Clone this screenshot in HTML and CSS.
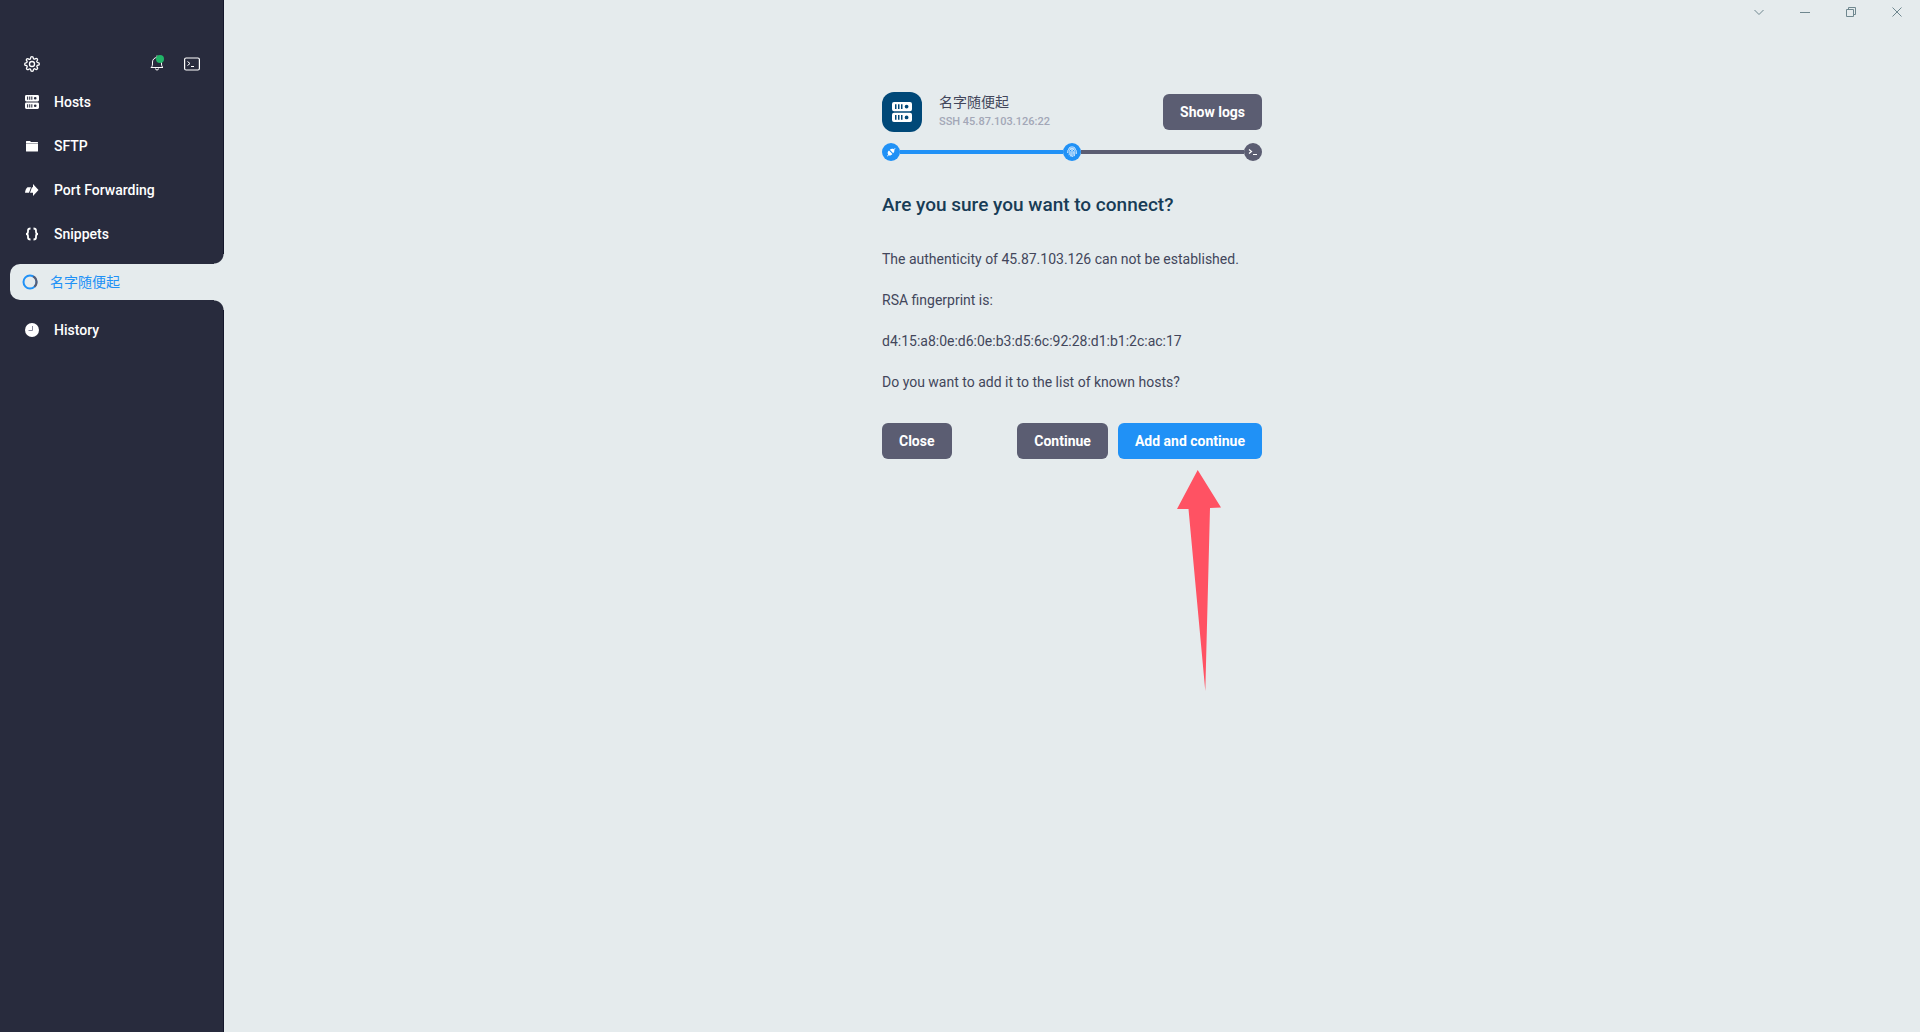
FILE: index.html
```html
<!DOCTYPE html>
<html lang="en">

<head>
	<meta charset="UTF-8">
	<title>名字随便起</title>
	<link rel="stylesheet" href="styles.css">
</head>

<body>
<svg class="defs" aria-hidden="true">
	<symbol id="server" viewBox="0 0 20 20">
		<path fill-rule="evenodd" d="M2 0h16a2 2 0 0 1 2 2v5.200a2 2 0 0 1-2 2H2a2 2 0 0 1-2-2V2a2 2 0 0 1 2-2zM3 2.300v4.600h1.500V2.300zm3 0v4.600h1.500V2.300zm3 0v4.600h1.500V2.300zM14.600 2.700a1.900 1.900 0 1 0 0 3.800 1.900 1.900 0 0 0 0-3.800z"/>
		<path fill-rule="evenodd" transform="translate(0 10.800)" d="M2 0h16a2 2 0 0 1 2 2v5.200a2 2 0 0 1-2 2H2a2 2 0 0 1-2-2V2a2 2 0 0 1 2-2zM3 2.300v4.600h1.500V2.300zm3 0v4.600h1.500V2.300zm3 0v4.600h1.500V2.300zM14.600 2.700a1.900 1.900 0 1 0 0 3.800 1.900 1.900 0 0 0 0-3.800z"/>
	</symbol>
</svg>

<nav class="sidebar">
	<div class="tools">
		<button aria-label="Settings">
			<svg width="16" height="16" viewBox="0 0 24 24" fill="none" stroke="currentColor" stroke-width="2">
				<circle cx="12" cy="12" r="3.800"/>
				<path d="M19.400 15a1.650 1.650 0 0 0 .33 1.820l.06.06a2 2 0 1 1-2.830 2.830l-.06-.06a1.650 1.650 0 0 0-2.800 1.170V21a2 2 0 1 1-4 0v-.09a1.650 1.650 0 0 0-2.900-1.080l-.06.06a2 2 0 1 1-2.830-2.830l.06-.06a1.650 1.650 0 0 0-1.170-2.800H3a2 2 0 1 1 0-4h.09a1.650 1.650 0 0 0 1.080-2.900l-.06-.06a2 2 0 1 1 2.830-2.830l.06.06a1.650 1.650 0 0 0 2.900-1.080V3a2 2 0 1 1 4 0v.09a1.650 1.650 0 0 0 2.900 1.080l.06-.06a2 2 0 1 1 2.830 2.830l-.06.06a1.650 1.650 0 0 0 1.080 2.900H21a2 2 0 1 1 0 4h-.09a1.650 1.650 0 0 0-1.510 1z"/>
			</svg>
		</button>
		<button class="bell" aria-label="Notifications">
			<svg width="14" height="18" viewBox="0 0 14 18" fill="none" stroke="currentColor">
				<path d="M1 12.500h12c-1.500-1-1.500-2.500-1.500-5.500A4.500 4.500 0 0 0 7 2.500 4.500 4.500 0 0 0 2.500 7c0 3 0 4.500-1.500 5.500zM7 2.500V.5M5.500 13.500a1.500 1.500 0 0 0 3 0"/>
			</svg>
			<span class="dot"></span>
		</button>
		<button aria-label="New terminal">
			<svg width="16" height="14" viewBox="0 0 16 14" fill="none" stroke="currentColor">
				<rect x=".6" y="1" width="14.800" height="12" rx="1.500" stroke-width="1.200"/>
				<path d="M3.500 4.500l2.500 2-2.500 2M7 9.500h3"/>
			</svg>
		</button>
	</div>
	<ul class="menu">
		<li><a href="#hosts">
			<svg width="14" height="14" fill="currentColor"><use href="#server"/></svg>
			Hosts
		</a></li>
		<li><a href="#sftp">
			<svg width="14" height="14" viewBox="0 0 14 14" fill="currentColor">
				<path d="M1 2.500a.5.5 0 0 1 .5-.5h3.500l1 1h6.500a.5.5 0 0 1 .5.5V4H1z"/>
				<path d="M1 4h12v1H1z" opacity=".6"/>
				<path d="M1 5h12v7a.5.5 0 0 1-.5.5h-11A.5.5 0 0 1 1 12z"/>
			</svg>
			SFTP
		</a></li>
		<li><a href="#forwarding">
			<svg width="14" height="14" viewBox="0 0 14 14" fill="currentColor">
				<path d="M8 1l5.500 6L8 13V9.800H5L7 4.200h1zM2.500 4.200H6L4 9.800H0C.3 7.500 1 5 2.500 4.200z"/>
			</svg>
			Port Forwarding
		</a></li>
		<li><a href="#snippets">
			<svg width="14" height="14" viewBox="0 0 14 14" fill="none" stroke="currentColor" stroke-width="1.800">
				<path d="M5.500 1.500C3.500 1.500 3 2 3 3.500v1.300C3 6.200 2.500 7 1 7c1.500 0 2 .8 2 2.200v1.300c0 1.500.5 2 2.500 2M8.500 1.500c2 0 2.500.5 2.500 2v1.300C11 6.200 11.500 7 13 7c-1.500 0-2 .8-2 2.200v1.300c0 1.500-.5 2-2.500 2"/>
			</svg>
			Snippets
		</a></li>
		<li class="current"><a href="#session">
			<svg width="16" height="16" viewBox="0 0 16 16" fill="none" stroke-width="2">
				<circle cx="8" cy="8" r="6.500" stroke="#2091f6"/>
				<path d="M11.200 2.300a6.500 6.500 0 0 1 1.200 10.500" stroke="#5b5d72"/>
			</svg>
			名字随便起
		</a></li>
		<li><a href="#history">
			<svg width="14" height="14" viewBox="0 0 14 14">
				<circle cx="7" cy="7" r="7" fill="currentColor"/>
				<path d="M7.500 3v4.500h-4" fill="none" stroke="#85869a"/>
			</svg>
			History
		</a></li>
	</ul>
</nav>

<main class="content">
	<div class="titlebar">
		<button aria-label="More">
			<svg width="12" height="12" viewBox="0 0 12 12"><path d="M1.500 4L6 8.500 10.500 4"/></svg>
		</button>
		<button aria-label="Minimize">
			<svg width="12" height="12" viewBox="0 0 12 12"><path d="M1 6.500h10"/></svg>
		</button>
		<button aria-label="Restore">
			<svg width="12" height="12" viewBox="0 0 12 12"><path d="M1.500 3.500h7v7h-7zM3.500 3.500v-2h7v7h-2"/></svg>
		</button>
		<button aria-label="Close window">
			<svg width="12" height="12" viewBox="0 0 12 12"><path d="M1.500 1.500l9 9M10.500 1.500l-9 9"/></svg>
		</button>
	</div>

	<section class="connect">
		<header class="host">
			<span class="logo">
				<svg width="20" height="20" fill="#fff"><use href="#server"/></svg>
			</span>
			<div class="info">
				<div class="name">名字随便起</div>
				<div class="address">SSH 45.87.103.126:22</div>
			</div>
			<button class="btn">Show logs</button>
		</header>

		<div class="steps">
			<span class="step done">
				<svg width="10" height="10" viewBox="0 0 10 10" fill="#fff">
					<path d="M1 9l1.200-1.200C1.200 6 1.700 4.700 3 3.600L6.400 7C5.300 8.300 4 8.800 2.700 8.300L1.500 9.500zM9 1L7.800 2.200C6.500 1.500 5 1.700 3.800 2.800l3.400 3.400C8.400 5 8.500 3.700 8.300 2.700L9.500 1.500z"/>
				</svg>
			</span>
			<span class="line done"></span>
			<span class="step done">
				<svg width="10" height="12" viewBox="0 0 10 12" fill="none" stroke="#fff" stroke-width=".8">
					<path d="M1.500 2.500C3.200.4 6.800.4 8.500 2.500M.7 7V5.500C.7 1.200 9.300 1.200 9.300 5.500V8M2 9.200c.6-1.200.2-2.500.2-3.700 0-3.200 5.600-3.200 5.600 0 0 2 0 3.400-.6 4.700M3.300 10.400c.8-1.600.5-3.300.5-4.700 0-1.600 2.500-1.600 2.500 0 0 2 0 3.500-.8 5.300M5 5.500c.1 2 0 3.500-.5 5"/>
				</svg>
			</span>
			<span class="line"></span>
			<span class="step">
				<svg width="10" height="10" viewBox="0 0 10 10" fill="none" stroke="#fff" stroke-width="1.200">
					<path d="M1 2.500l2.500 2L1 6.500M5 7.500h4"/>
				</svg>
			</span>
		</div>

		<h1>Are you sure you want to connect?</h1>
		<p>The authenticity of 45.87.103.126 can not be established.</p>
		<p>RSA fingerprint is:</p>
		<p>d4:15:a8:0e:d6:0e:b3:d5:6c:92:28:d1:b1:2c:ac:17</p>
		<p>Do you want to add it to the list of known hosts?</p>

		<div class="actions">
			<button class="btn close">Close</button>
			<button class="btn">Continue</button>
			<button class="btn primary">Add and continue</button>
			<svg class="arrow" width="44" height="222" viewBox="0 0 44 222" fill="#ff5263">
				<path d="M20.700 0L44 37.500l-11 .5-4.700 183L11.500 39H0z"/>
			</svg>
		</div>
	</section>
</main>
</body>

</html>
```

FILE: styles.css
```css
* {
	box-sizing: border-box;
	margin: 0;
	padding: 0;
}

body {
	display: flex;
	min-height: 100vh;
	background: #e5ebed;
	color: #42465b;
	font-family: Roboto, "Noto Sans CJK SC", sans-serif;
	font-size: 14px;
	line-height: 20px;
}

button {
	border: 0;
	background: none;
	color: inherit;
	font: inherit;
	cursor: pointer;
}

svg {
	display: block;
	flex: none;
}

.defs {
	position: absolute;
	width: 0;
	height: 0;
}

/* sidebar */
.sidebar {
	flex: none;
	width: 224px;
	padding-top: 52px;
	background: #282b3d;
	box-shadow: inset -1px 0 #14172b;
	color: #fff;
}

.tools {
	display: flex;
	align-items: center;
	gap: 20px;
	height: 24px;
	padding: 0 24px;
}

.tools button:first-child {
	margin-right: auto;
}

.bell {
	position: relative;
}

.dot {
	position: absolute;
	top: 0;
	right: 0;
	width: 8px;
	height: 8px;
	border-radius: 50%;
	background: #21b568;
}

.menu {
	padding-top: 4px;
	list-style: none;
}

.menu a {
	display: flex;
	align-items: center;
	gap: 15px;
	height: 44px;
	padding-left: 25px;
	color: #fff;
	font-weight: 500;
	text-decoration: none;
}

.menu .current {
	padding: 8px 0 8px 10px;
	position: relative;
}

.menu .current a {
	gap: 12px;
	height: 36px;
	padding-left: 12px;
	border-radius: 10px 0 0 10px;
	background: #e5ebed;
	color: #2091f6;
	font-weight: 400;
}

/* rounded corners above and below the open tab */
.menu .current::before,
.menu .current::after {
	content: "";
	position: absolute;
	right: 0;
	width: 10px;
	height: 10px;
}

.menu .current::before {
	top: -2px;
	background: radial-gradient(circle at 0 0, #282b3d 9px, #e5ebed 10px);
}

.menu .current::after {
	bottom: -2px;
	background: radial-gradient(circle at 0 100%, #282b3d 9px, #e5ebed 10px);
}

/* content */
.content {
	flex: 1;
}

.titlebar {
	display: flex;
	justify-content: flex-end;
	height: 24px;
}

.titlebar button {
	display: flex;
	align-items: center;
	justify-content: center;
	width: 46px;
}

.titlebar svg {
	fill: none;
	stroke: #6f878f;
}

.connect {
	width: 380px;
	margin: 68px auto 0;
}

.host {
	display: flex;
	align-items: center;
}

.logo {
	display: flex;
	align-items: center;
	justify-content: center;
	width: 40px;
	height: 40px;
	border-radius: 12px;
	background: #004878;
}

.info {
	flex: 1;
	padding-left: 17px;
}

.address {
	color: #a3a7b7;
	font-size: 11px;
	font-weight: 500;
}

.btn {
	height: 36px;
	padding: 0 17px;
	border-radius: 6px;
	background: #5b5d72;
	color: #fff;
	font-weight: 700;
}

.btn.primary {
	background: #2091f6;
}

.steps {
	display: flex;
	align-items: center;
	margin-top: 11px;
}

.step {
	display: flex;
	align-items: center;
	justify-content: center;
	width: 18px;
	height: 18px;
	border-radius: 50%;
	background: #5b5d72;
}

.line {
	flex: 1;
	height: 4px;
	background: #5b5d72;
}

.step.done,
.line.done {
	background: #2091f6;
}

h1 {
	margin: 32px 0;
	color: #183c56;
	font-size: 19px;
	font-weight: 500;
	line-height: 24px;
}

.connect p {
	margin-bottom: 21px;
}

.actions {
	display: flex;
	gap: 10px;
	margin-top: 31px;
	position: relative;
}

.actions .close {
	margin-right: auto;
}

/* pointer to the button that adds the host */
.arrow {
	position: absolute;
	top: 47px;
	right: 41px;
}
```
